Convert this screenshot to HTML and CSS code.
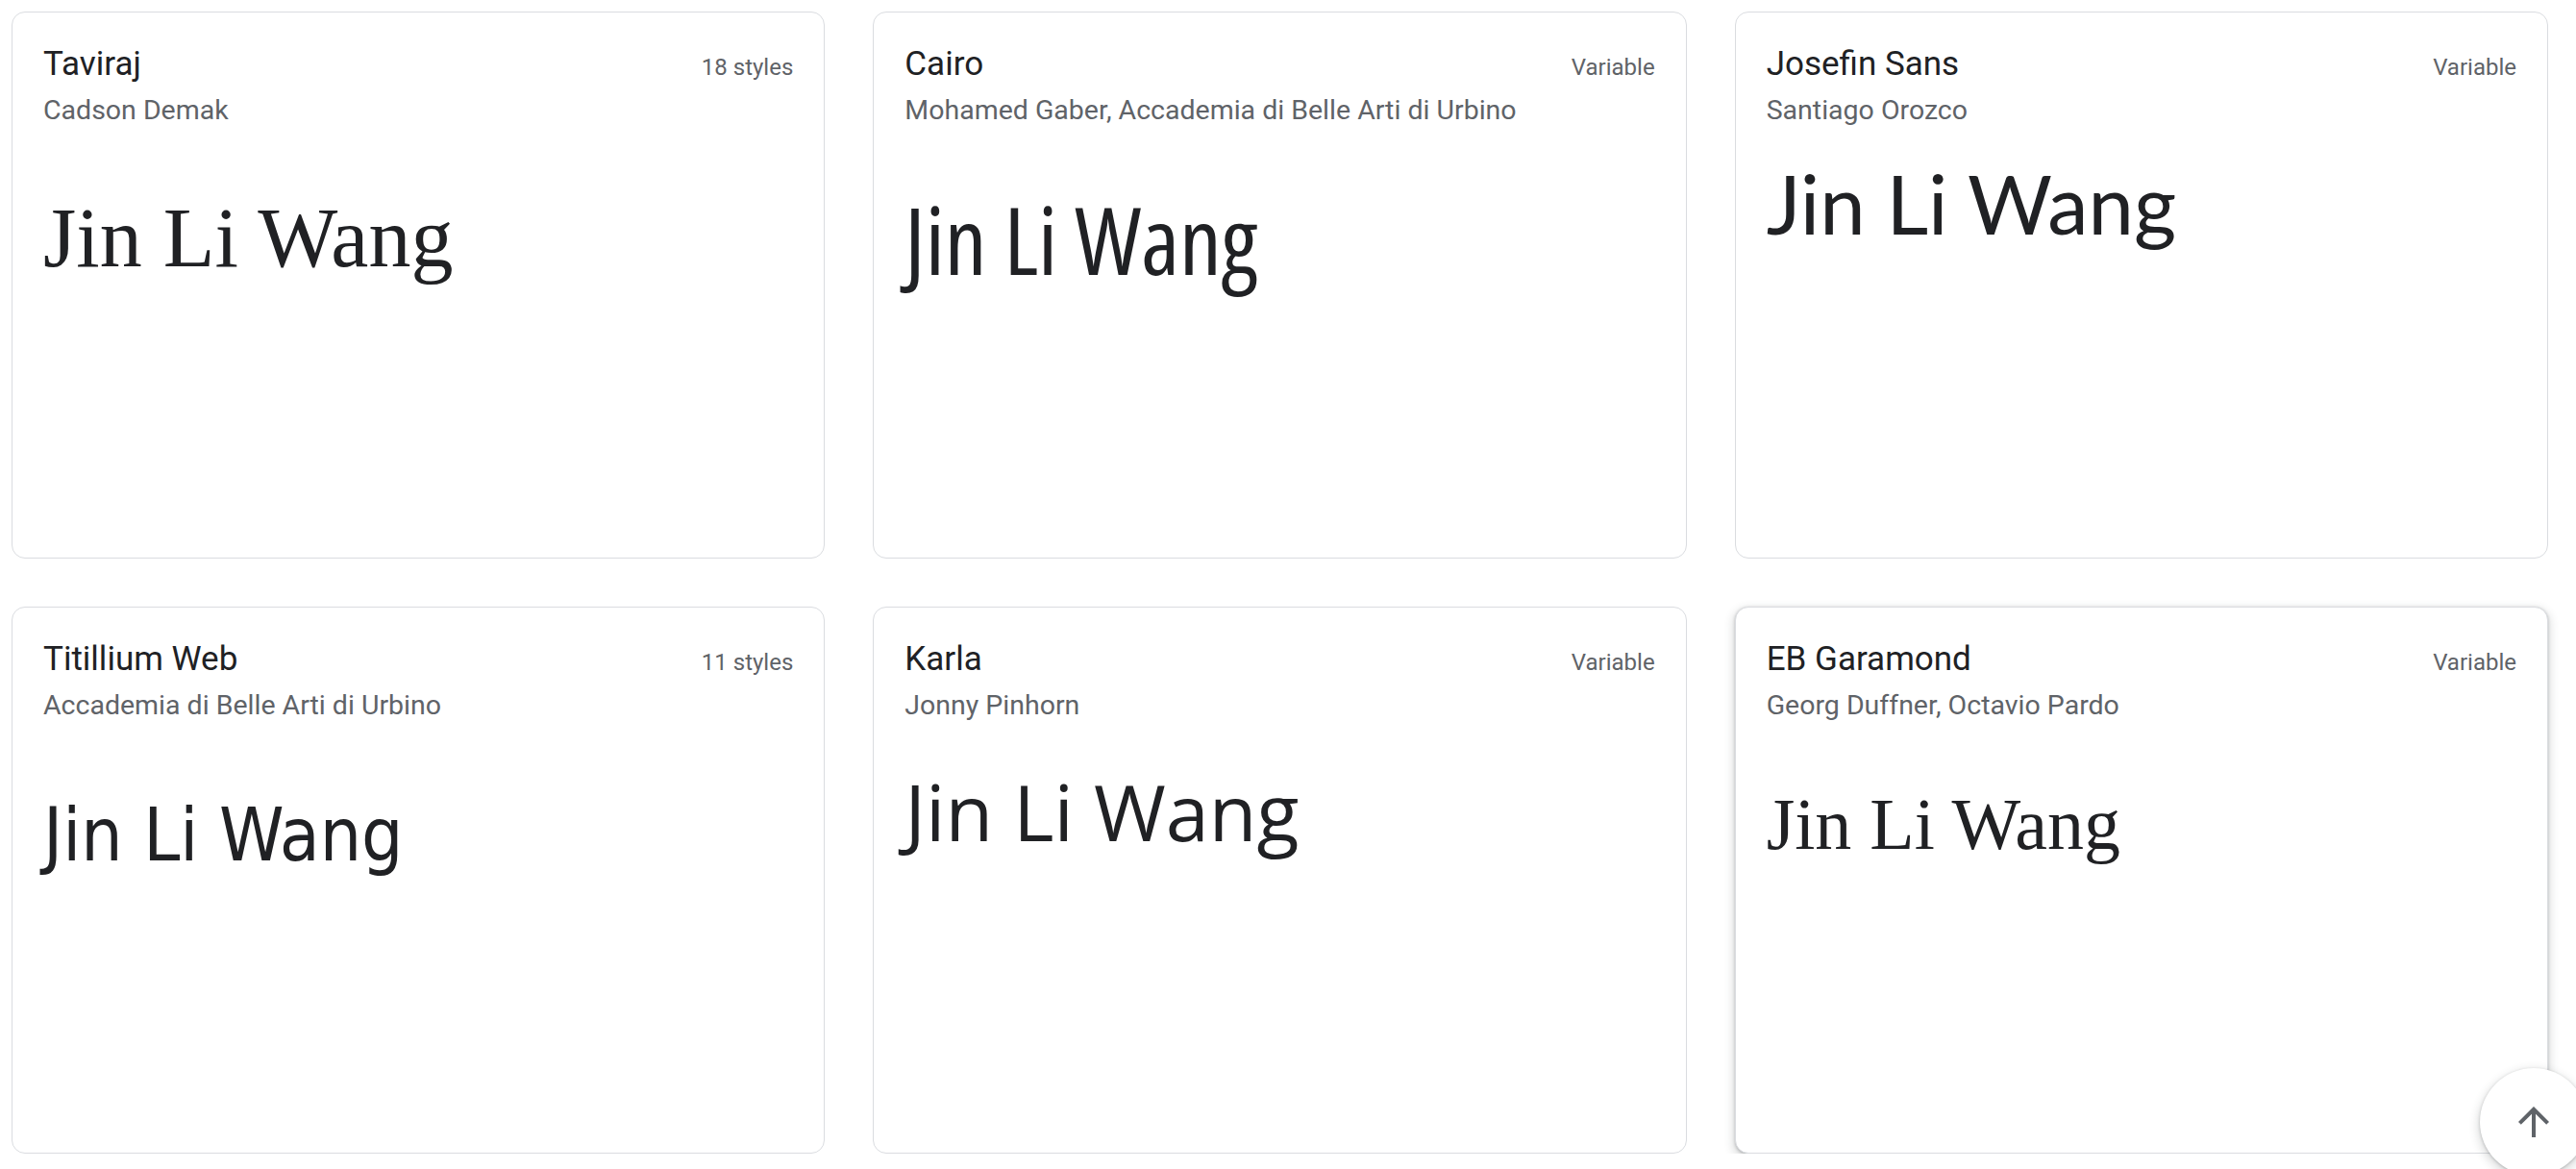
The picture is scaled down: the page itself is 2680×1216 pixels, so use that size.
FILE: index.html
```html
<!DOCTYPE html>
<html lang="en">
<head>
    <meta charset="UTF-8">
    <meta name="viewport" content="width=device-width, initial-scale=1.0">
    <title>Browse Fonts</title>
    <link rel="stylesheet" href="styles.css">
</head>
<body>

<div class="font-grid">
    <a class="font-card" href="#">
        <div class="card-header">
            <span class="family-name">Taviraj</span>
            <span class="family-meta">18 styles</span>
        </div>
        <div class="designer">Cadson Demak</div>
        <div class="preview preview-taviraj">Jin Li Wang</div>
    </a>

    <a class="font-card" href="#">
        <div class="card-header">
            <span class="family-name">Cairo</span>
            <span class="family-meta">Variable</span>
        </div>
        <div class="designer">Mohamed Gaber, Accademia di Belle Arti di Urbino</div>
        <div class="preview preview-cairo">Jin Li Wang</div>
    </a>

    <a class="font-card" href="#">
        <div class="card-header">
            <span class="family-name">Josefin Sans</span>
            <span class="family-meta">Variable</span>
        </div>
        <div class="designer">Santiago Orozco</div>
        <div class="preview preview-josefin">Jin Li Wang</div>
    </a>

    <a class="font-card" href="#">
        <div class="card-header">
            <span class="family-name">Titillium Web</span>
            <span class="family-meta">11 styles</span>
        </div>
        <div class="designer">Accademia di Belle Arti di Urbino</div>
        <div class="preview preview-titillium">Jin Li Wang</div>
    </a>

    <a class="font-card" href="#">
        <div class="card-header">
            <span class="family-name">Karla</span>
            <span class="family-meta">Variable</span>
        </div>
        <div class="designer">Jonny Pinhorn</div>
        <div class="preview preview-karla">Jin Li Wang</div>
    </a>

    <a class="font-card hovered" href="#">
        <div class="card-header">
            <span class="family-name">EB Garamond</span>
            <span class="family-meta">Variable</span>
        </div>
        <div class="designer">Georg Duffner, Octavio Pardo</div>
        <div class="preview preview-garamond">Jin Li Wang</div>
    </a>
</div>

<button class="back-to-top" aria-label="Back to top">
    <svg viewBox="0 0 24 24" width="48" height="48">
        <path d="M4 12l1.41 1.41L11 7.83V20h2V7.83l5.58 5.59L20 12l-8-8-8 8z"/>
    </svg>
</button>

</body>
</html>
```

FILE: styles.css
```css
body {
    margin: 0;
    padding: 12px 29px 0 12px;
    font-family: Roboto, "Noto Sans", Arial, sans-serif;
    background-color: #fff;
    color: #202124;
    overflow: hidden;
}
.font-grid {
    display: grid;
    grid-template-columns: repeat(3, 1fr);
    grid-auto-rows: 569px;
    gap: 50px;
}
.font-card {
    display: block;
    border: 1px solid #dadce0;
    border-radius: 14px;
    padding: 34px 32px 32px;
    color: inherit;
    text-decoration: none;
    overflow: hidden;
    background: #fff;
}
.font-card.hovered {
    box-shadow: 0 1px 3px rgba(60, 64, 67, 0.3), 0 4px 8px 3px rgba(60, 64, 67, 0.15);
}
.card-header {
    display: flex;
    justify-content: space-between;
    align-items: baseline;
    line-height: 40px;
}
.family-name {
    font-size: 35px;
    color: #202124;
}
.family-meta {
    font-size: 24px;
    color: #5f6368;
}
.designer {
    margin-top: 8px;
    font-size: 28.5px;
    line-height: 34px;
    color: #5f6368;
    white-space: nowrap;
}
.preview {
    line-height: 1;
    color: #202124;
    white-space: nowrap;
}
.preview-taviraj {
    font-family: "Liberation Serif", serif;
    font-size: 88px;
    margin-top: 72px;
}
.preview-cairo {
    font-family: "Open Sans", sans-serif;
    font-stretch: 75%;
    font-size: 97px;
    margin-top: 68px;
}
.preview-josefin {
    font-family: Lato, sans-serif;
    font-size: 85px;
    margin-top: 37px;
}
.preview-titillium {
    font-family: "DejaVu Sans Condensed", "DejaVu Sans", sans-serif;
    font-size: 76px;
    margin-top: 80px;
}
.preview-karla {
    font-family: "Open Sans", sans-serif;
    font-size: 81px;
    margin-top: 52px;
}
.preview-garamond {
    font-family: "Liberation Serif", serif;
    font-size: 76px;
    margin-top: 68px;
}
.back-to-top {
    position: fixed;
    right: -12px;
    bottom: -7px;
    width: 112px;
    height: 112px;
    border: none;
    border-radius: 50%;
    background: #fff;
    box-shadow: 0 1px 3px rgba(60, 64, 67, 0.3), 0 4px 8px 3px rgba(60, 64, 67, 0.15);
    display: flex;
    align-items: center;
    justify-content: center;
    padding: 0;
    cursor: pointer;
}
.back-to-top svg {
    fill: #5f6368;
}
```
